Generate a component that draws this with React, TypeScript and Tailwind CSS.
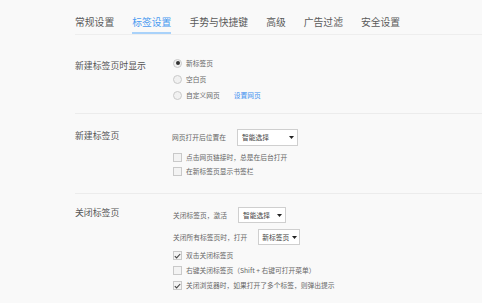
import React from "react";

const Radio = ({ checked }: { checked?: boolean }) => (
  <span className="w-[9px] h-[9px] rounded-full border border-[#c9c9c9] bg-[#f1f1f1] flex items-center justify-center shrink-0">
    {checked && <span className="w-[4px] h-[4px] rounded-full bg-[#333]" />}
  </span>
);

const Check = ({ checked }: { checked?: boolean }) => (
  <span className="w-[9px] h-[9px] border border-[#c9c9c9] bg-[#f3f3f3] flex items-center justify-center shrink-0">
    {checked && (
      <svg width="7" height="6" viewBox="0 0 7 6">
        <path d="M0.8 3.2 L2.6 4.9 L6.2 1" fill="none" stroke="#444" strokeWidth="1.1" />
      </svg>
    )}
  </span>
);

const Select = ({ text, w, h, pl }: { text: string; w: string; h: string; pl: string }) => (
  <div className={`${w} ${h} ${pl} bg-white border border-[#cfcfcf] flex items-center justify-between gap-[3px] pr-[3px] shrink-0 whitespace-nowrap`}>
    <span className="text-[6.75px] text-[#444] leading-none whitespace-nowrap">{text}</span>
    <svg width="5" height="3" viewBox="0 0 5 3" className="shrink-0">
      <path d="M0 0 H5 L2.5 3 Z" fill="#222" />
    </svg>
  </div>
);

const small = "text-[6.75px] leading-none text-[#666] whitespace-nowrap";

export default function App() {
  const tabs = ["常规设置", "标签设置", "手势与快捷键", "高级", "广告过滤", "安全设置"];
  return (
    <div className="w-[482px] h-[303px] bg-[#f9f9f9] overflow-hidden font-['Noto_Sans_CJK_SC',sans-serif]">
      <div className="pl-[75px]">
        <div className="flex gap-[18px] h-[35px] pt-[16px] border-b border-[#eeeeee]">
          {tabs.map((t, i) => (
            <div
              key={t}
              className={`h-[18px] text-[9.8px] leading-[12px] ${
                i === 1 ? "text-[#4a9af0] border-b-2 border-[#a9d2fa]" : "text-[#5a5a5a]"
              }`}
            >
              {t}
            </div>
          ))}
        </div>

        <div className="flex pt-[20px] pb-[10px] border-b border-[#ececec] h-[79px]">
          <div className="w-[97px] mt-[5px] text-[8.9px] leading-[12px] text-[#555]">新建标签页时显示</div>
          <div className="flex flex-col">
            <div className="h-[16px] flex items-center gap-[4px] pl-[1px]">
              <Radio checked />
              <span className={small}>新标签页</span>
            </div>
            <div className="h-[16px] flex items-center gap-[4px] pl-[1px]">
              <Radio />
              <span className={small}>空白页</span>
            </div>
            <div className="h-[16px] flex items-center gap-[4px] pl-[1px]">
              <Radio />
              <span className={small}>自定义网页</span>
              <span className="text-[6.75px] leading-none text-[#3d8ff0] ml-[10px]">设置网页</span>
            </div>
          </div>
        </div>

        <div className="flex pt-[15px] border-b border-[#ececec] h-[80px]">
          <div className="w-[97px] mt-[1px] text-[8.9px] leading-[12px] text-[#555]">新建标签页</div>
          <div className="flex flex-col">
            <div className="flex items-center gap-[11px]">
              <span className={small}>网页打开后位置在</span>
              <Select text="智能选择" w="w-[61px]" h="h-[17px]" pl="pl-[4px]" />
            </div>
            <div className="mt-[4px] h-[14px] flex items-center gap-[4px] pl-[1px]">
              <Check />
              <span className={small}>点击网页链接时，总是在后台打开</span>
            </div>
            <div className="h-[14px] flex items-center gap-[4px] pl-[1px]">
              <Check />
              <span className={small}>在新标签页显示书签栏</span>
            </div>
          </div>
        </div>

        <div className="flex pt-[13px]">
          <div className="w-[97px] text-[8.9px] leading-[12px] text-[#555]">关闭标签页</div>
          <div className="flex flex-col">
            <div className="flex items-center gap-[11px] pl-[1px]">
              <span className={small}>关闭标签页，激活</span>
              <Select text="智能选择" w="w-[48px]" h="h-[16px]" pl="pl-[4px]" />
            </div>
            <div className="mt-[6px] flex items-center gap-[11px] pl-[1px]">
              <span className={small}>关闭所有标签页时，打开</span>
              <Select text="新标签页" w="w-[42px]" h="h-[16px]" pl="pl-[3px]" />
            </div>
            <div className="mt-[3px] h-[15px] flex items-center gap-[4px] pl-[1px]">
              <Check checked />
              <span className={small}>双击关闭标签页</span>
            </div>
            <div className="h-[15px] flex items-center gap-[4px] pl-[1px]">
              <Check />
              <span className={small}>右键关闭标签页（Shift + 右键可打开菜单）</span>
            </div>
            <div className="h-[15px] flex items-center gap-[4px] pl-[1px]">
              <Check checked />
              <span className={small}>关闭浏览器时，如果打开了多个标签，则弹出提示</span>
            </div>
          </div>
        </div>
      </div>
    </div>
  );
}
